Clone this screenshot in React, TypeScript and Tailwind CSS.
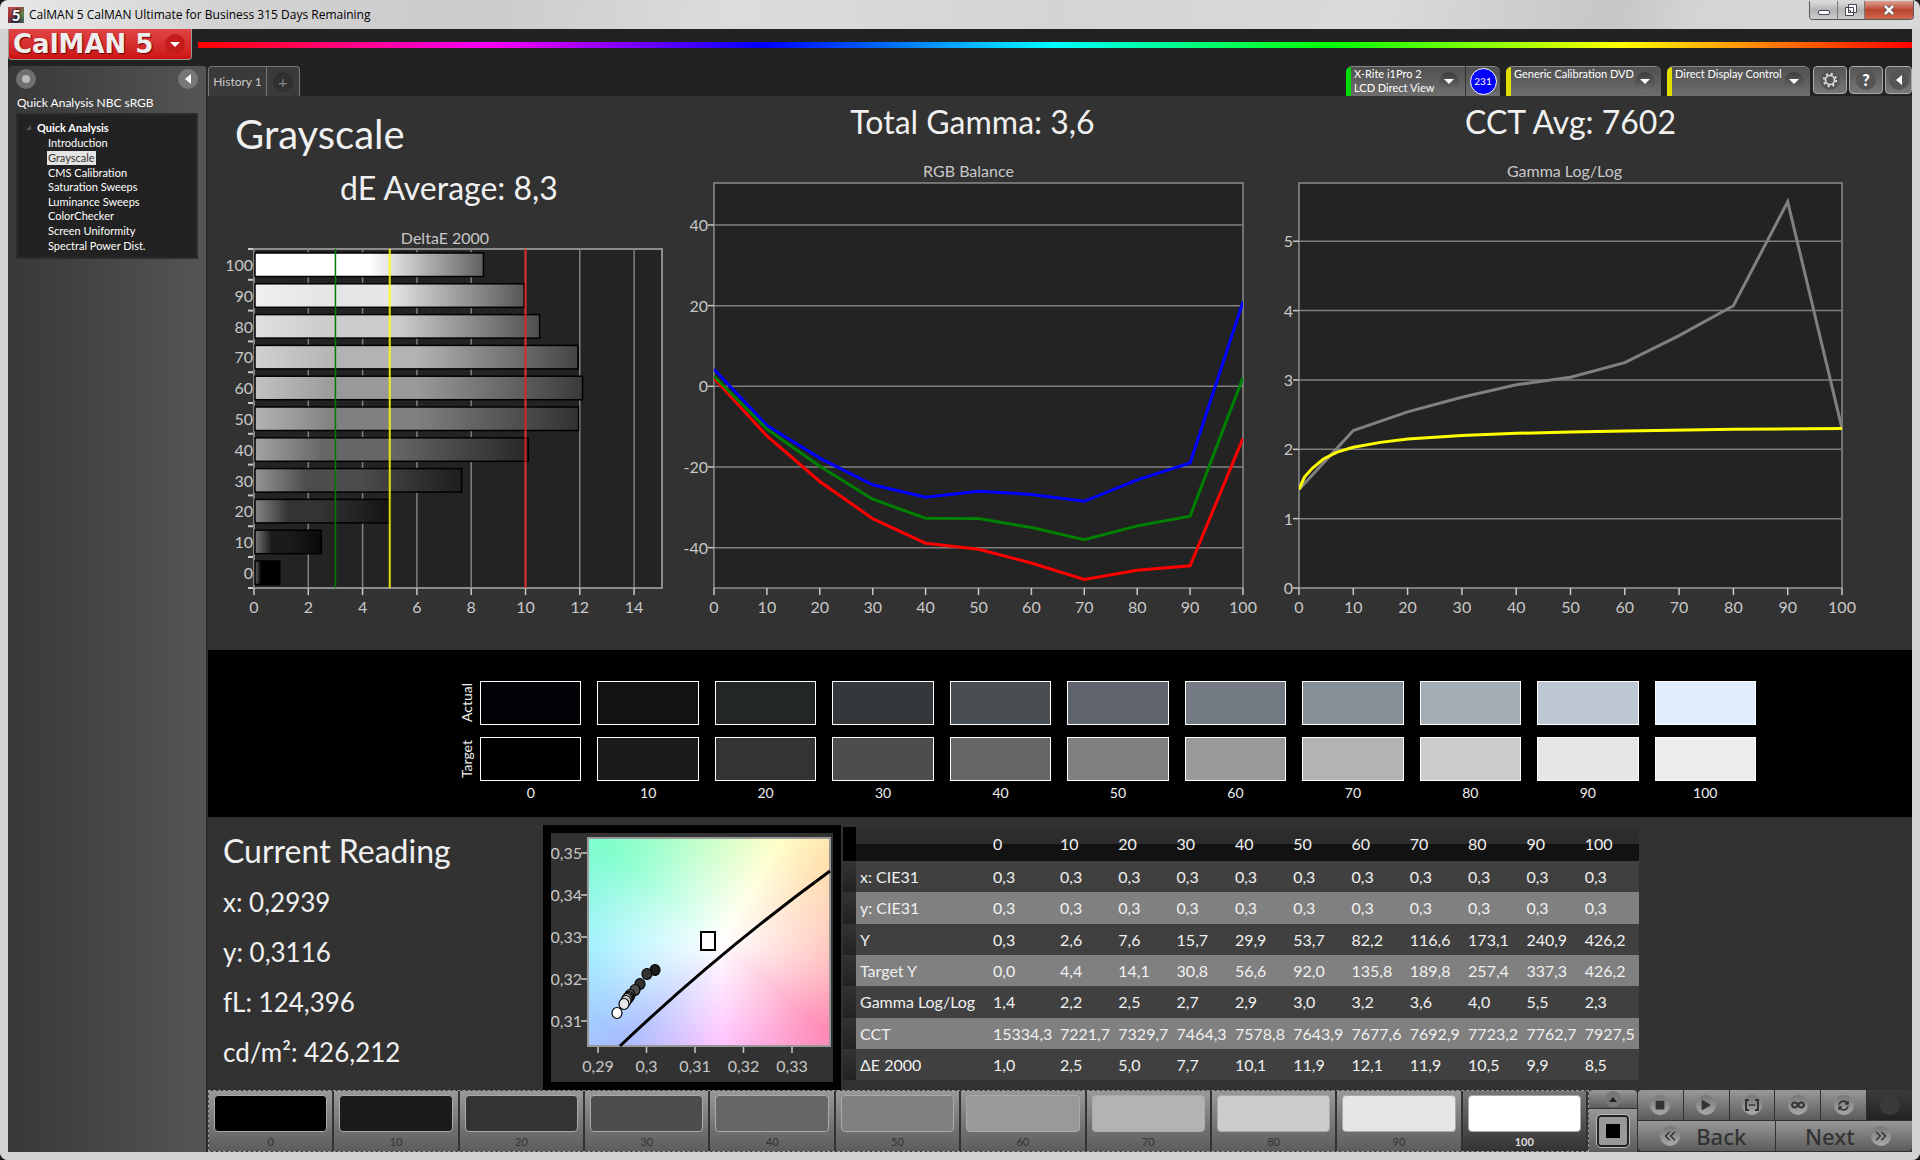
import { clsx } from "clsx";
import { ChevronsLeft, ChevronsRight } from "lucide-react";
import { FaPlay, FaStop, FaSyncAlt, FaInfinity } from "react-icons/fa";

const STEPS = [0, 10, 20, 30, 40, 50, 60, 70, 80, 90, 100];
const GRAYS = ["#000000", "#1b1b1b", "#333333", "#4d4d4d", "#666666", "#808080", "#999999", "#b3b3b3", "#cccccc", "#e6e6e6", "#ffffff"];
const ACTUAL = ["#020206", "#111214", "#222627", "#34383b", "#484e52", "#5f646c", "#747a83", "#878f98", "#a2adb6", "#bcc7d3", "#e0edff"];
const TARGET = ["#000000", "#1b1b1b", "#333333", "#4d4d4d", "#666666", "#808080", "#999999", "#b3b3b3", "#cccccc", "#e6e6e6", "#ededed"];
const DELTA_E = [0.95, 2.48, 5, 7.65, 10.1, 11.95, 12.1, 11.93, 10.52, 9.95, 8.45];

const PAGES = ["Introduction", "Grayscale", "CMS Calibration", "Saturation Sweeps", "Luminance Sweeps", "ColorChecker", "Screen Uniformity", "Spectral Power Dist."];

const ROWS: [string, string[]][] = [
  ["x: CIE31", Array(11).fill("0,3")],
  ["y: CIE31", Array(11).fill("0,3")],
  ["Y", ["0,3", "2,6", "7,6", "15,7", "29,9", "53,7", "82,2", "116,6", "173,1", "240,9", "426,2"]],
  ["Target Y", ["0,0", "4,4", "14,1", "30,8", "56,6", "92,0", "135,8", "189,8", "257,4", "337,3", "426,2"]],
  ["Gamma Log/Log", ["1,4", "2,2", "2,5", "2,7", "2,9", "3,0", "3,2", "3,6", "4,0", "5,5", "2,3"]],
  ["CCT", ["15334,3", "7221,7", "7329,7", "7464,3", "7578,8", "7643,9", "7677,6", "7692,9", "7723,2", "7762,7", "7927,5"]],
  ["ΔE 2000", ["1,0", "2,5", "5,0", "7,7", "10,1", "11,9", "12,1", "11,9", "10,5", "9,9", "8,5"]],
];

const RGB_LINES = [
  { color: "#0000ff", values: [4.2, -9.7, -17.8, -24.4, -27.5, -26, -26.8, -28.5, -23.2, -19, 21] },
  { color: "#ff0000", values: [2, -12.3, -23.6, -32.8, -38.9, -40.4, -43.8, -47.9, -45.6, -44.5, -12.9] },
  { color: "#008000", values: [2.5, -10.6, -19.8, -28, -32.7, -32.8, -35, -38, -34.6, -32.2, 2.2] },
];
const GAMMA = [1.42, 2.27, 2.54, 2.75, 2.93, 3.04, 3.25, 3.64, 4.07, 5.57, 2.3];
const GAMMA_TARGET = [[0, 1.42], [1, 1.6], [2.5, 1.73], [4.5, 1.86], [7, 1.96], [10, 2.03], [15, 2.1], [20, 2.15], [30, 2.2], [40, 2.23], [50, 2.25], [60, 2.265], [80, 2.29], [100, 2.3]];

function mix(hex: string, to: number, amount: number) {
  const v = parseInt(hex.slice(1, 3), 16);
  const r = Math.round(v + (to - v) * amount);
  return `rgb(${r},${r},${r})`;
}

function DeltaEChart() {
  const x = (v: number) => 30 + v * 27.15;
  return (
    <svg viewBox="0 6 450 374" className="block w-full" fontSize="16" fill="#c8c8c8">
      <defs>
        {GRAYS.map((c, i) => (
          <linearGradient key={i} id={`bar${i}`}>
            <stop offset="0" stopColor={mix(c, 255, 0.4)} />
            <stop offset="0.25" stopColor={c} />
            <stop offset="0.5" stopColor={c} />
            <stop offset="1" stopColor={mix(c, 0, 0.62)} />
          </linearGradient>
        ))}
      </defs>
      <rect x="30" y="10" width="408" height="339" fill="#232323" stroke="#8c8c8c" strokeWidth="2" />
      {[0, 2, 4, 6, 8, 10, 12, 14].map((v) => (
        <g key={v}>
          <path d={`M${x(v)} 10V349`} stroke="#808080" strokeWidth="1.5" />
          <path d={`M${x(v)} 349v7`} stroke="#c8c8c8" strokeWidth="1.5" />
          <text x={x(v)} y="374" textAnchor="middle">{v}</text>
        </g>
      ))}
      {STEPS.map((s, i) => {
        const top = 10 + (10 - i) * 30.8;
        return (
          <g key={s}>
            <rect x="31" y={top + 4} width={x(DELTA_E[i]) - 31} height="23.5" fill={`url(#bar${i})`} stroke="#000" strokeWidth="1.5" />
            <path d={`M24 ${top}h5`} stroke="#c8c8c8" strokeWidth="2" />
            <text x="29" y={top + 22} textAnchor="end">{s}</text>
          </g>
        );
      })}
      <path d="M24 349h5" stroke="#c8c8c8" strokeWidth="2" />
      <path d={`M${x(3)} 10V349`} stroke="#007a00" strokeWidth="1.5" />
      <path d={`M${x(5)} 10V349`} stroke="#ffff00" strokeOpacity=".85" strokeWidth="2" />
      <path d={`M${x(10)} 10V349`} stroke="#ee1c1c" strokeOpacity=".85" strokeWidth="2" />
    </svg>
  );
}

function AxisChart({ id, width, max, min, ticks, lines }: {
  id: string;
  width: number;
  max: number;
  min: number;
  ticks: number[];
  lines: { color: string; points: number[][] }[];
}) {
  const x = (v: number) => 38 + (v / 100) * width;
  const y = (v: number) => 5 + ((max - v) / (max - min)) * 405;
  return (
    <svg viewBox={`0 2 ${width + 56} 439`} className="block w-full" fontSize="16" fill="#c8c8c8">
      <clipPath id={id}>
        <rect x="38" y="5" width={width} height="405" />
      </clipPath>
      <rect x="38" y="5" width={width} height="405" fill="#232323" stroke="#8c8c8c" strokeWidth="1.5" />
      {ticks.map((t) => (
        <g key={t}>
          <path d={`M38 ${y(t)}H${38 + width}`} stroke="#808080" strokeWidth="1.5" />
          <path d={`M32 ${y(t)}h6`} stroke="#c8c8c8" strokeWidth="1.5" />
          <text x="32" y={y(t) + 6} textAnchor="end">{t}</text>
        </g>
      ))}
      {STEPS.map((s) => (
        <g key={s}>
          <path d={`M${x(s)} 410v7`} stroke="#c8c8c8" strokeWidth="1.5" />
          <text x={x(s)} y="435" textAnchor="middle">{s}</text>
        </g>
      ))}
      {lines.map((l) => (
        <polyline key={l.color} clipPath={`url(#${id})`} fill="none" stroke={l.color} strokeWidth="3" points={l.points.map(([a, b]) => `${x(a)},${y(b)}`).join(" ")} />
      ))}
    </svg>
  );
}

const READINGS = [[104, 137], [96, 141], [89, 151], [84, 157], [79, 162], [78, 164], [77, 165], [76, 166], [75, 168], [73, 171], [66, 180]];

function CieChart() {
  return (
    <div className="relative w-[298px] border-8 border-black bg-[#323232]">
      <div className="absolute top-1 left-9 h-[210px] w-[244px] border-2 border-[#999] bg-[radial-gradient(ellipse_at_55%_50%,#fff_0%,#ffffff90_35%,#ffffff20_70%,transparent_85%),conic-gradient(from_0deg_at_55%_50%,#ccffc0,#ffffc4_30deg,#ffdca8_55deg,#ffb8a8_90deg,#ff88b4_130deg,#ffbcff_180deg,#a8bcff_225deg,#98f0ff_268deg,#80ffcc_310deg,#ccffc0_360deg)]" />
      <svg viewBox="0 0 282 246" className="relative block w-full" fontSize="16" fill="#c8c8c8">
        {["0,35", "0,34", "0,33", "0,32", "0,31"].map((t, i) => (
          <g key={t}>
            <text x="31" y={26 + i * 42} textAnchor="end">{t}</text>
            <path d={`M30 ${20 + i * 42}h6`} stroke="#c8c8c8" strokeWidth="1.5" />
          </g>
        ))}
        {["0,29", "0,3", "0,31", "0,32", "0,33"].map((t, i) => (
          <g key={t}>
            <text x={47 + i * 48.5} y="239" textAnchor="middle">{t}</text>
            <path d={`M${47 + i * 48.5} 214v6`} stroke="#c8c8c8" strokeWidth="1.5" />
          </g>
        ))}
        <path d="M69 213Q168 119 279 38" fill="none" stroke="#000" strokeWidth="3" />
        <rect x="150" y="99" width="14" height="18" fill="#fff" stroke="#000" strokeWidth="2" />
        {READINGS.map(([cx, cy], i) => (
          <ellipse key={i} cx={cx} cy={cy} rx="5" ry="5.5" fill={GRAYS[i === 0 ? 1 : Math.max(i, 2)]} stroke="#000" strokeWidth="1.2" />
        ))}
      </svg>
    </div>
  );
}

function Round({ children, className = "bg-linear-to-b from-[#777] to-[#aaa]" }: { children?: React.ReactNode; className?: string }) {
  return <span className={clsx("flex size-5 shrink-0 items-center justify-center rounded-full", className)}>{children}</span>;
}

function Down() {
  return <svg viewBox="0 0 10 5" className="w-[10px]" fill="#fff"><path d="M0 0h10l-5 5z" /></svg>;
}

function Left() {
  return <svg viewBox="0 0 6 10" className="h-[10px]" fill="#fff"><path d="M6 0v10L0 5z" /></svg>;
}

function Gear() {
  return (
    <svg viewBox="0 0 16 16" className="size-4" fill="none" stroke="#ddd">
      <circle cx="8" cy="8" r="4.5" strokeWidth="1.6" />
      <circle cx="8" cy="8" r="6.2" strokeWidth="2" strokeDasharray="2.2 2.67" />
    </svg>
  );
}

function Source({ name, mode, color, className }: { name: string; mode?: string; color: string; className: string }) {
  return (
    <button className={clsx("flex h-[30px] items-stretch overflow-hidden border-t border-[#888] bg-linear-to-b from-[#505050] to-[#6e6e6e] text-left text-[11px] leading-[14px] text-white", className)}>
      <span className={clsx("w-[5px] shrink-0", color)} />
      <span className="grow pl-[3px] whitespace-nowrap">{name}<br />{mode}</span>
      <span className="flex items-center pr-1.5"><Round className="bg-linear-to-b from-[#3c3c3c] to-[#707070]"><Down /></Round></span>
    </button>
  );
}

function TopBar() {
  return (
    <div className="flex h-[37px] bg-[#222]">
      <button className="flex h-[31px] w-[184px] shrink-0 items-center justify-between rounded-b border border-t-0 border-[#999] bg-linear-to-b from-[#e04444] to-[#cc1111] pr-1.5 pl-1 font-['DejaVu_Sans'] text-[26px] leading-none font-bold text-[#eee]">
        <span className="whitespace-nowrap [text-shadow:1px_1px_1px_#600]">CalMAN 5</span>
        <Round className="bg-[#c41c1c]"><Down /></Round>
      </button>
      <div className="mt-[13px] ml-1.5 h-[6px] grow bg-[linear-gradient(90deg,#f00,#f0f_17%,#00f_33%,#0ff_50%,#0f0_66%,#ff0_83%,#f00)]" />
    </div>
  );
}

function TitleBar() {
  return (
    <header className="flex h-[29px] shrink-0 items-start rounded-t-lg bg-[linear-gradient(100deg,#e8e8e8,#d2d2d2_12%,#cbcbcb_25%,#dcdcdc_38%,#d4d4d4_55%,#dadada_72%,#c6c6c6_84%,#d4d4d4_88%,#d8d8d8)] pr-1.5 pl-2">
      <span className="mt-[7px] flex size-4 items-center justify-center bg-[conic-gradient(#a33,#585,#335,#a33,#b55)] text-[15px] leading-none font-black text-white [text-shadow:0_0_2px_#000,0_0_2px_#000]">5</span>
      <h1 className="mt-1.5 ml-[5px] font-['Open_Sans'] text-[12px] leading-[18px] text-black">CalMAN 5 CalMAN Ultimate for Business 315 Days Remaining</h1>
      <div className="mt-px ml-auto flex h-[19px] overflow-hidden rounded-b border border-t-0 border-[#555]">
        <button aria-label="Minimize" className="flex w-7 items-center justify-center border-r border-[#777] bg-linear-to-b from-[#ddd] via-[#b4b4b4] to-[#ccc]">
          <span className="mt-1 h-[5px] w-3 rounded-xs border border-[#445] bg-white" />
        </button>
        <button aria-label="Restore" className="flex w-[27px] items-center justify-center border-r border-[#777] bg-linear-to-b from-[#ddd] via-[#b4b4b4] to-[#ccc]">
          <svg viewBox="0 0 12 12" className="w-3" fill="#fff" stroke="#445"><path d="M3.500.5h8v8h-8z M.5 3.500h8v8h-8z M3.500 6.500h2v2h-2z" /></svg>
        </button>
        <button aria-label="Close" className="flex w-12 items-center justify-center bg-linear-to-b from-[#dfa193] via-[#b9452f] to-[#d2674f]">
          <svg viewBox="0 0 12 10" className="w-3" fill="none"><path d="M2 1l8 8M10 1L2 9" stroke="#445" strokeWidth="4" /><path d="M2 1l8 8M10 1L2 9" stroke="#fff" strokeWidth="2.500" /></svg>
        </button>
      </div>
    </header>
  );
}

function Sidebar() {
  return (
    <aside className="w-[200px] shrink-0 rounded-t border-r-2 border-[#2c2c2c] bg-linear-to-r from-[#383838] to-[#555] px-2 pt-[3px] text-[11px] text-white">
      <div className="flex justify-between">
        <Round className="bg-[#707070]"><span className="size-2 rounded-full bg-[#bbb]" /></Round>
        <button aria-label="Collapse"><Round className="bg-[#777]"><Left /></Round></button>
      </div>
      <h2 className="mt-1.5 pl-px text-[12px] leading-4">Quick Analysis NBC sRGB</h2>
      <nav className="mt-0.5 h-[146px] border-2 border-[#2c2c2c] bg-[#222] pt-1 pl-2">
        <p className="flex items-center gap-1.5 leading-[17px] font-bold">
          <svg viewBox="0 0 5 5" className="w-[5px]" fill="#555"><path d="M5 0v5H0z" /></svg>
          Quick Analysis
        </p>
        <ul className="grid h-[117px] grid-rows-8 pl-[21px]">
          {PAGES.map((p) => (
            <li key={p} className="flex items-center leading-[14px]">
              <a href="#" className={clsx("px-px whitespace-nowrap", p === "Grayscale" && "bg-[#e4e4e4] text-[#333]")}>{p}</a>
            </li>
          ))}
        </ul>
      </nav>
    </aside>
  );
}

function Tabs() {
  return (
    <div className="flex h-[30px] bg-[#222]">
      <button className="w-[59px] rounded-tl border border-b-0 border-[#777] bg-[#3a3a3a] text-[12px] text-[#ccc]">History 1</button>
      <button aria-label="Add" className="flex w-[33px] items-center justify-center rounded-tr border border-b-0 border-l-0 border-[#777] bg-[#3a3a3a]">
        <Round className="bg-[#303030] text-[16px] text-[#888]">+</Round>
      </button>
      <div className="ml-auto flex">
        <Source name="X-Rite i1Pro 2" mode="LCD Direct View" color="bg-[#00dd00]" className="w-[119px] rounded-tl-md" />
        <div className="mr-1.5 flex w-[35px] items-center justify-center rounded-tr-md border-t border-l border-t-[#888] border-l-[#333] bg-linear-to-b from-[#505050] to-[#6e6e6e]">
          <span className="flex size-[27px] items-center justify-center rounded-full border border-white bg-[#0000ff] text-[10px] text-white">231</span>
        </div>
        <Source name="Generic Calibration DVD" color="bg-[#e0e000]" className="mr-1.5 w-[155px] rounded-t-md" />
        <Source name="Direct Display Control" color="bg-[#e0e000]" className="w-[143px] rounded-t-md" />
        <div className="ml-[3px] flex gap-0.5 [&>button]:flex [&>button]:h-7 [&>button]:items-center [&>button]:justify-center [&>button]:rounded [&>button]:border [&>button]:border-[#aaa] [&>button]:bg-linear-to-b [&>button]:from-[#555] [&>button]:to-[#777]">
          <button aria-label="Settings" className="w-[34px]"><Round className="bg-[#555]"><Gear /></Round></button>
          <button aria-label="Help" className="w-[34px]"><Round className="bg-[#555] text-[16px] font-black text-white">?</Round></button>
          <button aria-label="Collapse" className="w-[27px] rounded-r-none border-r-0"><Round className="bg-[#555]"><Left /></Round></button>
        </div>
      </div>
    </div>
  );
}

function Swatches({ label, colors }: { label: string; colors: string[] }) {
  return (
    <div className="flex h-11 items-center">
      <span className="mr-[5px] flex h-full w-4 items-center justify-center text-[14px] leading-4 [writing-mode:sideways-lr]">{label}</span>
      <div className="grid grow grid-cols-11 gap-4">
        {colors.map((c, i) => (
          <div key={i} className="h-11 border border-white" style={{ backgroundColor: c }} />
        ))}
      </div>
    </div>
  );
}

function DataTable() {
  return (
    <table className="mt-0.5 ml-0.5 w-[796px] table-fixed border-collapse self-start text-left text-[16px] leading-5">
      <colgroup>
        <col className="w-[13px]" />
        <col className="w-[133px]" />
        <col className="w-[67px]" />
      </colgroup>
      <thead>
        <tr className="h-[34px] bg-[linear-gradient(#2c2c2c_50%,#121212_50%)]">
          <td className="bg-black" />
          <td />
          {STEPS.map((s) => <th key={s} className="pl-1 font-normal">{s}</th>)}
        </tr>
      </thead>
      <tbody>
        {ROWS.map(([name, cells], r) => (
          <tr key={name} className={clsx(r % 2 ? "bg-[#808080]" : "bg-[#404040]", r % 3 === 1 ? "h-8" : "h-[31px]")}>
            <td className="bg-linear-to-b from-[#333] to-[#222]" />
            <th className="pl-1 font-normal whitespace-nowrap">{name}</th>
            {cells.map((c, i) => <td key={i} className="pl-1">{c}</td>)}
          </tr>
        ))}
      </tbody>
    </table>
  );
}

function PatchStrip() {
  return (
    <div className="grid grow grid-cols-11 border border-dashed border-[#999]">
      {STEPS.map((s, i) => (
        <button
          key={s}
          className={clsx(
            "flex flex-col items-stretch border-r-2 border-[#333] px-[5px] pt-1 text-[11px] leading-[14px]",
            s === 100 ? "bg-linear-to-b from-[#777] to-[#333] font-bold text-[#ddd]" : "bg-linear-to-b from-[#999] to-[#5c5c5c] text-[#333]",
          )}
        >
          <span className="mb-[3px] h-[37px] rounded border border-[#aaa]" style={{ backgroundColor: GRAYS[i] }} />
          {s}
        </button>
      ))}
    </div>
  );
}

function Transport() {
  return (
    <div className="flex shrink-0 text-[#333] [&_button]:bg-linear-to-b [&_button]:from-[#999] [&_button]:to-[#5c5c5c]">
      <div className="flex w-[49px] flex-col gap-px border-r border-[#333]">
        <button aria-label="Up" className="flex h-[18px] items-center justify-center rounded-t">
          <span className="flex size-4 items-center justify-center rounded-full bg-[#777]"><svg viewBox="0 0 8 5" className="w-2" fill="#222"><path d="M0 5h8L4 0z" /></svg></span>
        </button>
        <button aria-label="Pattern" className="flex grow items-center justify-center">
          <span className="flex size-8 items-center justify-center rounded border-2 border-[#222] bg-[#999] outline outline-[#bbb]"><span className="size-3.5 bg-black" /></span>
        </button>
      </div>
      <div className="flex w-[274px] flex-col gap-px">
        <div className="grid h-[30px] grid-cols-6 gap-px [&>button]:flex [&>button]:items-center [&>button]:justify-center">
          <button aria-label="Stop" className="rounded-tl"><Round><FaStop size={10} /></Round></button>
          <button aria-label="Play"><Round><FaPlay size={10} /></Round></button>
          <button aria-label="Read series">
            <Round><svg viewBox="0 0 14 12" className="w-3.5" fill="none" stroke="#333" strokeWidth="2"><path d="M4 1H1v10h3M10 1h3v10h-3M4 6h1.500M6.300 6h1.500M8.600 6h1.500" /></svg></Round>
          </button>
          <button aria-label="Continuous"><Round><FaInfinity size={14} /></Round></button>
          <button aria-label="Refresh"><Round><FaSyncAlt size={11} /></Round></button>
          <span className="flex items-center justify-center rounded-tr bg-linear-to-b from-[#3c3c3c] to-[#222]"><Round className="bg-[#3a3a3a]" /></span>
        </div>
        <div className="grid h-[30px] grid-cols-2 gap-px font-['Noto_Sans'] text-[22px] leading-none font-medium">
          <button className="flex items-center justify-center gap-4 rounded-bl pr-1.5"><Round><ChevronsLeft size={18} /></Round>Back</button>
          <button className="flex items-center justify-center gap-4 rounded-br pl-2">Next<Round><ChevronsRight size={18} /></Round></button>
        </div>
      </div>
    </div>
  );
}

export default function App() {
  return (
    <div className="flex min-h-screen flex-col bg-[#1c1c1c] font-[Lato,sans-serif]">
      <TitleBar />
      <div className="flex grow flex-col rounded-b-lg border-r-8 border-b-8 border-l-8 border-[#d4d4d4]">
        <TopBar />
        <div className="flex grow bg-[#222]">
          <Sidebar />
          <main className="flex min-w-0 grow flex-col bg-[#323232] text-[#f0f0f0]">
            <Tabs />
            <section className="grid h-[554px] grid-cols-[468fr_585fr_651fr]">
              <div className="pt-3 pr-0.5 pl-4">
                <h2 className="pl-[11px] text-[40px] leading-[52px]">Grayscale</h2>
                <p className="text-center text-[32px] leading-[56px]">dE Average: 8,3</p>
                <h3 className="mt-[15px] pr-2 text-center text-[16px] leading-[14px] text-[#c8c8c8]">DeltaE 2000</h3>
                <DeltaEChart />
              </div>
              <div className="pt-1.5">
                <p className="pl-2 text-center text-[32px] leading-10">Total Gamma: 3,6</p>
                <h3 className="mt-5 text-center text-[16px] leading-[18px] text-[#c8c8c8]">RGB Balance</h3>
                <AxisChart id="rgb" width={529} max={50.4} min={-50} ticks={[40, 20, 0, -20, -40]} lines={RGB_LINES.map((l) => ({ color: l.color, points: l.values.map((v, i) => [i * 10, v]) }))} />
              </div>
              <div className="pt-1.5 pr-[52px]">
                <p className="pl-5 text-center text-[32px] leading-10">CCT Avg: 7602</p>
                <h3 className="mt-5 pl-2 text-center text-[16px] leading-[18px] text-[#c8c8c8]">Gamma Log/Log</h3>
                <AxisChart id="gamma" width={543} max={5.84} min={0} ticks={[5, 4, 3, 2, 1, 0]} lines={[{ color: "#808080", points: GAMMA.map((v, i) => [i * 10, v]) }, { color: "#ffff00", points: GAMMA_TARGET }]} />
              </div>
            </section>
            <section className="flex h-[167px] flex-col gap-3 bg-black pt-[31px] pr-[156px] pl-[251px]">
              <Swatches label="Actual" colors={ACTUAL} />
              <Swatches label="Target" colors={TARGET} />
              <div className="-mt-2.5 ml-[21px] grid grid-cols-11 gap-4 text-center text-[14px] leading-5">
                {STEPS.map((s) => <span key={s}>{s}</span>)}
              </div>
            </section>
            <section className="flex grow pt-2">
              <div className="w-[335px] shrink-0 pl-[15px]">
                <h2 className="text-[32px] leading-[52px]">Current Reading</h2>
                <div className="text-[26px] leading-[50px]">
                  <p>x: 0,2939</p>
                  <p>y: 0,3116</p>
                  <p>fL: 124,396</p>
                  <p>cd/m²: 426,212</p>
                </div>
              </div>
              <CieChart />
              <DataTable />
            </section>
            <footer className="flex h-[62px]">
              <PatchStrip />
              <Transport />
            </footer>
          </main>
        </div>
      </div>
    </div>
  );
}
